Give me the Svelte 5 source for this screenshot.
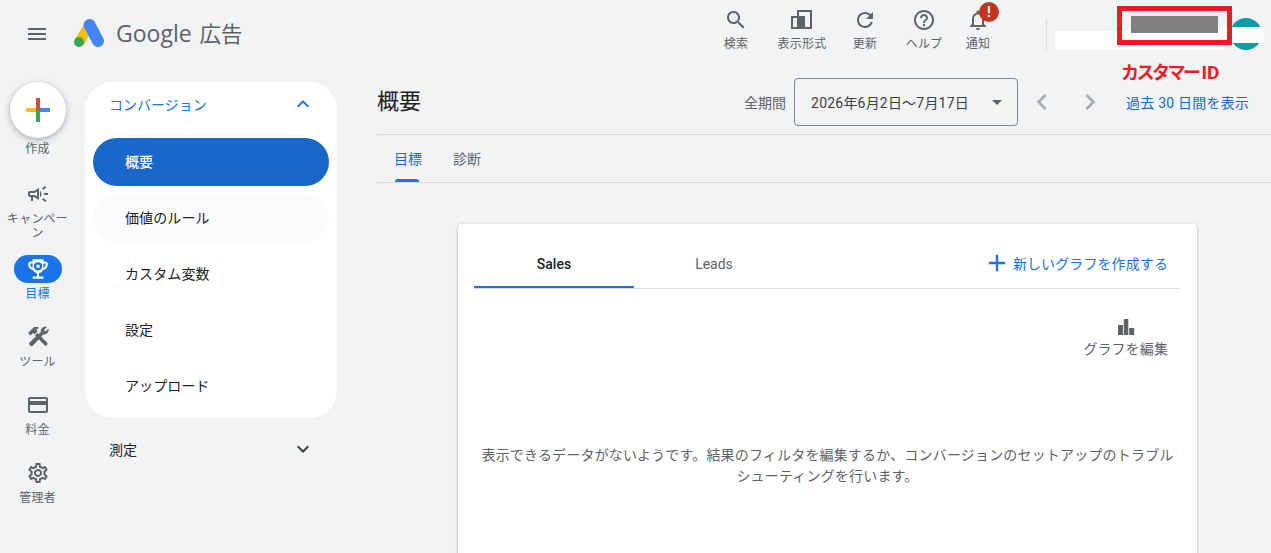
<script>
  const topActions = [
    { label: '検索', width: 60, path: 'M15.5 14h-.79l-.28-.27C15.41 12.59 16 11.11 16 9.5 16 5.91 13.09 3 9.5 3S3 5.91 3 9.5 5.91 16 9.5 16c1.61 0 3.09-.59 4.23-1.57l.27.28v.79l5 4.99L20.49 19l-4.99-5zm-6 0C7.01 14 5 11.99 5 9.5S7.01 5 9.5 5 14 7.01 14 9.5 11.99 14 9.5 14z' },
    { label: '表示形式', width: 72, path: 'M1 8h6V2h15v19H1zM3 10h4v9H3zM9 4h11v15h-5V8H9z' },
    { label: '更新', width: 54, path: 'M17.65 6.35C16.2 4.9 14.21 4 12 4c-4.42 0-7.99 3.58-7.99 8s3.57 8 7.99 8c3.73 0 6.84-2.55 7.73-6h-2.08c-.82 2.33-3.04 4-5.65 4-3.31 0-6-2.69-6-6s2.69-6 6-6c1.66 0 3.14.69 4.22 1.78L13 11h7V4l-2.35 2.35z' },
    { label: 'ヘルプ', width: 64, path: 'M11 18h2v-2h-2v2zm1-16C6.48 2 2 6.48 2 12s4.48 10 10 10 10-4.48 10-10S17.52 2 12 2zm0 18c-4.41 0-8-3.59-8-8s3.59-8 8-8 8 3.59 8 8-3.59 8-8 8zm0-14c-2.21 0-4 1.79-4 4h2c0-1.1.9-2 2-2s2 .9 2 2c0 2-3 1.75-3 5h2c0-2.25 3-2.5 3-5 0-2.21-1.79-4-4-4z' },
    { label: '通知', width: 44, badge: true, path: 'M12 22c1.1 0 2-.9 2-2h-4c0 1.1.9 2 2 2zm6-6v-5c0-3.07-1.63-5.64-4.5-6.32V4c0-.83-.67-1.5-1.5-1.5s-1.5.67-1.5 1.5v.68C7.64 5.36 6 7.92 6 11v5l-2 2v1h16v-1l-2-2zm-2 1H8v-6c0-2.48 1.51-4.5 4-4.5s4 2.02 4 4.5v6z' }
  ];

  const railItems = [
    { label: 'キャンペーン', h: 75, size: 24, path: 'M18 11v2h4v-2h-4zm-2 6.61c.96.71 2.21 1.65 3.2 2.39.4-.53.8-1.07 1.2-1.6-.99-.74-2.24-1.68-3.2-2.4-.4.54-.8 1.08-1.2 1.61zM20.4 5.6c-.4-.53-.8-1.07-1.2-1.6-.99.74-2.24 1.68-3.2 2.4.4.53.8 1.07 1.2 1.6.96-.72 2.21-1.65 3.2-2.4zM4 9c-1.1 0-2 .9-2 2v2c0 1.1.9 2 2 2h1v4h2v-4h1l5 3V6L8 9H4zm5.03 1.71L11 9.53v4.94l-1.97-1.18-.48-.29H4v-2h4.55l.48-.29zM15.5 12c0-1.33-.58-2.53-1.5-3.35v6.69c.92-.81 1.5-2.01 1.5-3.34z' },
    { label: '目標', h: 68, size: 26, active: true, path: 'M19 5h-2V3H7v2H5c-1.1 0-2 .9-2 2v1c0 2.55 1.92 4.63 4.39 4.94.63 1.5 1.98 2.63 3.61 2.96V19H7v2h10v-2h-4v-3.1c1.63-.33 2.98-1.46 3.61-2.96C19.08 12.63 21 10.55 21 8V7c0-1.1-.9-2-2-2zM5 8V7h2v3.82C5.84 10.4 5 9.3 5 8zm14 0c0 1.3-.84 2.4-2 2.82V7h2v1z' },
    { label: 'ツール', h: 68, size: 24, path: 'M21 2 18 5l1.5 1.5L22.5 3.5c.8 3.3-1.7 6.5-5.2 5.9L7 20.5a2 2 0 0 1-3-.3 2 2 0 0 1-.3-3L14.9 7C14 3.5 17.5 1 21 2zM9 10.5 11.5 8 21 17.5a1.8 1.8 0 0 1-2.6 2.6zM2 8l6-6h4l1 1-2.5 1.5 1 2L8.5 9.5 7 8 4.5 10.5z' },
    { label: '料金', h: 68, size: 24, path: 'M20 4H4c-1.11 0-1.99.89-1.99 2L2 18c0 1.11.89 2 2 2h16c1.11 0 2-.89 2-2V6c0-1.11-.89-2-2-2zm0 14H4v-6h16v6zm0-10H4V6h16v2z' },
    { label: '管理者', h: 68, size: 24, path: 'M19.43 12.98c.04-.32.07-.64.07-.98 0-.34-.03-.66-.07-.98l2.11-1.65c.19-.15.24-.42.12-.64l-2-3.46c-.09-.16-.26-.25-.44-.25-.06 0-.12.01-.17.03l-2.49 1c-.52-.4-1.08-.73-1.69-.98l-.38-2.65C14.46 2.18 14.25 2 14 2h-4c-.25 0-.46.18-.49.42l-.38 2.65c-.61.25-1.17.59-1.69.98l-2.49-1c-.06-.02-.12-.03-.18-.03-.17 0-.34.09-.43.25l-2 3.46c-.13.22-.07.49.12.64l2.11 1.65c-.04.32-.07.65-.07.98 0 .33.03.66.07.98l-2.11 1.65c-.19.15-.24.42-.12.64l2 3.46c.09.16.26.25.44.25.06 0 .12-.01.17-.03l2.49-1c.52.4 1.08.73 1.69.98l.38 2.65c.03.24.24.42.49.42h4c.25 0 .46-.18.49-.42l.38-2.65c.61-.25 1.17-.59 1.69-.98l2.49 1c.06.02.12.03.18.03.17 0 .34-.09.43-.25l2-3.46c.12-.22.07-.49-.12-.64l-2.11-1.65zm-1.98-1.71c.04.31.05.52.05.73 0 .21-.02.43-.05.73l-.14 1.13.89.7 1.08.84-.7 1.21-1.27-.51-1.04-.42-.9.68c-.43.32-.84.56-1.25.73l-1.06.43-.16 1.13-.2 1.35h-1.4l-.19-1.35-.16-1.13-1.06-.43c-.43-.18-.83-.41-1.23-.71l-.91-.7-1.06.43-1.27.51-.7-1.21 1.08-.84.89-.7-.14-1.13c-.03-.31-.05-.54-.05-.74s.02-.43.05-.73l.14-1.13-.89-.7-1.08-.84.7-1.21 1.27.51 1.04.42.9-.68c.43-.32.84-.56 1.25-.73l1.06-.43.16-1.13.2-1.35h1.39l.19 1.35.16 1.13 1.06.43c.43.18.83.41 1.23.71l.91.7 1.06-.43 1.27-.51.7 1.21-1.07.85-.89.7.14 1.13zM12 8c-2.21 0-4 1.79-4 4s1.79 4 4 4 4-1.79 4-4-1.79-4-4-4zm0 6c-1.1 0-2-.9-2-2s.9-2 2-2 2 .9 2 2-.9 2-2 2z' }
  ];

  const navItems = ['概要', '価値のルール', 'カスタム変数', '設定', 'アップロード'];
</script>

<div class="page">
  <header class="topbar">
    <button class="menu" aria-label="メニュー">
      <svg width="24" height="24" viewBox="0 0 24 24"><path d="M3 18h18v-2H3v2zm0-5h18v-2H3v2zm0-7v2h18V6H3z" /></svg>
    </button>
    <svg class="logo" width="32" height="30" viewBox="0 0 32 30" aria-hidden="true">
      <path d="M11 5 L1 21 L9 28 L18 12 Z" fill="#fbbc04" />
      <line x1="15.5" y1="7" x2="24" y2="23" stroke="#4285f4" stroke-width="12" stroke-linecap="round" />
      <circle cx="5" cy="24" r="5" fill="#34a853" />
    </svg>
    <div class="brand"><span class="brand-google">Google</span><span class="brand-ja">広告</span></div>

    <div class="actions">
      {#each topActions as a}
        <div class="action" style="width: {a.width}px">
          <div class="action-icon">
            <svg width="24" height="24" viewBox="0 0 24 24"><path d={a.path} fill-rule="evenodd" /></svg>
            {#if a.badge}<span class="badge">!</span>{/if}
          </div>
          <span>{a.label}</span>
        </div>
      {/each}
    </div>
    <div class="divider"></div>
    <div class="account">
      <div class="avatar"></div>
      <div class="redact-white"></div>
      <div class="redact-strip"></div>
      <div class="redact-box"><div class="redact-gray"></div></div>
      <div class="redact-label">カスタマー<span>ID</span></div>
    </div>
  </header>

  <div class="body">
    <aside class="rail">
      <button class="create" aria-label="作成">
        <svg width="24" height="24" viewBox="0 0 24 24">
          <rect x="0" y="10" width="12" height="4" fill="#fbbc04" />
          <rect x="12" y="10" width="12" height="4" fill="#4285f4" />
          <rect x="10" y="0" width="4" height="12" fill="#ea4335" />
          <rect x="10" y="12" width="4" height="12" fill="#34a853" />
        </svg>
      </button>
      <div class="rail-label create-label">作成</div>
      {#each railItems as item}
        <div class="rail-item" class:active={item.active} style="height: {item.h}px">
          <div class="rail-icon">
            <svg width={item.size} height={item.size} viewBox="0 0 24 24">
              <path d={item.path} />
              {#if item.active}
                <circle cx="12" cy="9.5" r="3.8" fill="#1a73e8" />
                <circle cx="12" cy="9.5" r="1.6" fill="#fff" />
              {/if}
            </svg>
          </div>
          <div class="rail-label">{item.label}</div>
        </div>
      {/each}
    </aside>

    <nav class="nav">
      <div class="nav-card">
        <div class="nav-head">
          <span>コンバージョン</span>
          <svg width="24" height="24" viewBox="0 0 24 24"><path d="M7.41 15.41 12 10.83l4.59 4.58L18 14l-6-6-6 6z" /></svg>
        </div>
        {#each navItems as label, i}
          <div class="nav-item" class:selected={i === 0} class:hover={i === 1}>{label}</div>
        {/each}
      </div>
      <div class="nav-head closed">
        <span>測定</span>
        <svg width="24" height="24" viewBox="0 0 24 24"><path d="M7.41 8.59 12 13.17l4.59-4.58L18 10l-6 6-6-6z" /></svg>
      </div>
    </nav>

    <main class="main">
      <div class="title-row">
        <h1>概要</h1>
        <div class="date-tools">
          <span class="period">全期間</span>
          <div class="date-select">
            <span>2026年6月2日〜7月17日</span>
            <i class="caret"></i>
          </div>
          <svg class="pager" width="32" height="32" viewBox="0 0 24 24"><path d="M15.41 7.41 14 6l-6 6 6 6 1.41-1.41L10.83 12z" /></svg>
          <svg class="pager next" width="32" height="32" viewBox="0 0 24 24"><path d="M8.59 16.59 10 18l6-6-6-6-1.41 1.41L13.17 12z" /></svg>
          <span class="recent">過去 30 日間を表示</span>
        </div>
      </div>

      <div class="tabs">
        <div class="tab on">目標</div>
        <div class="tab">診断</div>
      </div>

      <section class="card">
        <div class="card-tabs">
          <div class="card-tab on">Sales</div>
          <div class="card-tab">Leads</div>
          <div class="new-graph">
            <svg width="28" height="28" viewBox="0 0 24 24"><path d="M19 13h-6v6h-2v-6H5v-2h6V5h2v6h6v2z" /></svg>
            <span>新しいグラフを作成する</span>
          </div>
        </div>
        <div class="edit-graph">
          <svg width="18" height="18" viewBox="0 0 18 18"><path d="M1 7h5v10H1zM6.8 1h4.5v16H6.8zM12.2 10h5v7h-5z" /></svg>
          <span>グラフを編集</span>
        </div>
        <p class="empty">表示できるデータがないようです。結果のフィルタを編集するか、コンバージョンのセットアップのトラブルシューティングを行います。</p>
      </section>
    </main>
  </div>
</div>

<style>
  :global(body) {
    margin: 0;
    background: #f1f3f5;
  }

  .page {
    height: 553px;
    overflow: hidden;
    background: #f1f3f5;
    font-family: Roboto, "Noto Sans CJK JP", sans-serif;
    color: #202124;
  }

  button {
    border: 0;
    padding: 0;
    background: none;
    cursor: pointer;
  }

  svg {
    display: block;
    fill: #5f6368;
  }

  /* top bar */
  .topbar {
    height: 68px;
    display: flex;
    align-items: center;
    padding-left: 25px;
  }

  .menu {
    width: 24px;
    height: 24px;
  }

  .logo {
    margin-left: 25px;
    margin-top: -2px;
  }

  .brand {
    margin-left: 10px;
    margin-top: -3px;
    color: #5f6368;
    font-size: 24px;
    display: flex;
    gap: 8px;
    align-items: baseline;
  }

  .brand-google {
    font-family: "Open Sans", Roboto, sans-serif;
    font-size: 23px;
  }

  .brand-ja {
    font-weight: 400;
    font-size: 21.5px;
  }

  .actions {
    display: flex;
    margin-left: auto;
    align-self: flex-start;
    padding-top: 8px;
  }

  .action {
    display: flex;
    flex-direction: column;
    align-items: center;
    font-size: 12px;
    line-height: 16px;
    letter-spacing: 0.2px;
    color: #5f6368;
    white-space: nowrap;
  }

  .action-icon {
    position: relative;
    height: 28px;
  }

  .badge {
    position: absolute;
    left: 13px;
    top: -6px;
    width: 20px;
    height: 20px;
    border-radius: 50%;
    background: #c5341f;
    color: #fff;
    font-size: 14px;
    font-weight: 700;
    line-height: 20px;
    text-align: center;
  }

  .divider {
    width: 1px;
    height: 32px;
    background: #dadce0;
    margin-left: 46px;
    flex: none;
  }

  .account {
    position: relative;
    width: 224px;
    flex: none;
    height: 68px;
  }

  .avatar {
    position: absolute;
    left: 183px;
    top: 18px;
    width: 32px;
    height: 32px;
    border-radius: 50%;
    background: #069fa6;
  }

  .redact-white {
    position: absolute;
    left: 8px;
    top: 31px;
    width: 168px;
    height: 19px;
    background: #fff;
  }

  .redact-strip {
    position: absolute;
    left: 176px;
    top: 27px;
    width: 41px;
    height: 16px;
    background: #fff;
  }

  .redact-box {
    position: absolute;
    left: 70px;
    top: 6px;
    width: 115px;
    height: 39px;
    box-sizing: border-box;
    border: 5px solid #ed1c24;
    padding: 5px 9px;
  }

  .redact-gray {
    width: 87px;
    height: 17px;
    background: #808080;
  }

  .redact-label {
    position: absolute;
    left: 74px;
    top: 61px;
    color: #ed1c24;
    font-size: 18px;
    font-weight: 700;
    line-height: 24px;
    white-space: nowrap;
    letter-spacing: -2.5px;
  }

  .redact-label span {
    font-size: 19px;
    letter-spacing: 0;
    margin-left: 3px;
  }

  /* body */
  .body {
    display: flex;
  }

  .rail {
    width: 75px;
    flex: none;
    display: flex;
    flex-direction: column;
    align-items: center;
    padding-top: 14px;
  }

  .create {
    width: 56px;
    height: 56px;
    border-radius: 50%;
    background: #fff;
    box-shadow: 0 2px 6px rgba(60, 64, 67, 0.4);
    display: grid;
    place-items: center;
  }

  .rail-label {
    font-size: 12px;
    line-height: 14px;
    letter-spacing: 0.2px;
    color: #5f6368;
    text-align: center;
    width: 62px;
  }

  .create-label {
    margin: 3px 0 22px;
    height: 17px;
    line-height: 17px;
  }

  .rail-item {
    display: flex;
    flex-direction: column;
    align-items: center;
  }

  .rail-icon {
    width: 48px;
    height: 28px;
    border-radius: 14px;
    display: grid;
    place-items: center;
    margin-bottom: 4px;
  }

  .rail-item.active .rail-icon {
    background: #1a73e8;
  }

  .rail-item.active svg {
    fill: #fff;
  }

  .rail-item.active .rail-label {
    color: #1a73e8;
  }

  .nav {
    width: 252px;
    flex: none;
    margin-left: 10px;
    padding-top: 14px;
  }

  .nav-card {
    background: #fff;
    border-radius: 28px;
    height: 336px;
    box-sizing: border-box;
    padding: 0 8px;
  }

  .nav-head {
    height: 46px;
    margin-bottom: 10px;
    box-sizing: border-box;
    padding: 0 14px 2px 16px;
    display: flex;
    align-items: center;
    justify-content: space-between;
    font-size: 14px;
    color: #1a73e8;
  }

  .nav-head svg {
    fill: #1a73e8;
  }

  .nav-head.closed {
    margin: 9px 0 0;
    padding: 0 22px 2px 24px;
    color: #202124;
  }

  .nav-head.closed svg {
    fill: #3c4043;
  }

  .nav-item {
    height: 48px;
    box-sizing: border-box;
    padding: 0 0 2px 32px;
    margin-bottom: 8px;
    border-radius: 24px;
    display: flex;
    align-items: center;
    font-size: 14px;
    letter-spacing: 0.1px;
  }

  .nav-item.selected {
    background: #1967c8;
    color: #fff;
    font-weight: 500;
  }

  .nav-item.hover {
    background: #fbfbfb;
  }

  .main {
    flex: 1;
    margin-left: 40px;
    min-width: 0;
  }

  .title-row {
    height: 66px;
    display: flex;
    align-items: center;
    border-bottom: 1px solid #dadce0;
    padding-right: 22px;
  }

  h1 {
    margin: -4px 0 0;
    font-size: 22px;
    font-weight: 400;
  }

  .date-tools {
    display: flex;
    align-items: center;
    margin-left: auto;
    margin-top: 2px;
    font-size: 14px;
  }

  .period {
    font-size: 14px;
    color: #5f6368;
    margin-right: 8px;
  }

  .date-select {
    width: 224px;
    height: 48px;
    box-sizing: border-box;
    border: 1px solid #80868b;
    border-radius: 4px;
    display: flex;
    align-items: center;
    justify-content: space-between;
    padding: 0 15px 0 16px;
    font-size: 14px;
    letter-spacing: 0.2px;
    color: #3c4043;
  }

  .caret {
    width: 0;
    height: 0;
    border: 5px solid transparent;
    border-top-color: #5f6368;
    border-bottom: 0;
  }

  .pager {
    fill: #a8abaf;
    margin-left: 8px;
  }

  .pager.next {
    margin-left: 16px;
    margin-right: 20px;
  }

  .recent {
    font-size: 14px;
    letter-spacing: 0.2px;
    color: #1967d2;
  }

  .tabs {
    display: flex;
    height: 47px;
    border-bottom: 1px solid #dadce0;
    padding-left: 17px;
    gap: 31px;
  }

  .tab {
    position: relative;
    font-size: 14px;
    line-height: 48px;
    color: #5f6368;
    width: 28px;
    white-space: nowrap;
  }

  .tab.on {
    color: #1967d2;
  }

  .tab.on::after {
    content: "";
    position: absolute;
    left: 1px;
    right: 3px;
    bottom: 0;
    height: 3px;
    background: #1a73e8;
    border-radius: 3px 3px 0 0;
  }

  .card {
    margin: 41px 0 0 81px;
    width: 739px;
    height: 420px;
    box-sizing: border-box;
    background: #fff;
    border-radius: 4px;
    box-shadow: 0 1px 3px rgba(60, 64, 67, 0.4);
    padding: 16px;
  }

  .card-tabs {
    display: flex;
    align-items: stretch;
    height: 48px;
    border-bottom: 1px solid #dadce0;
    margin-right: 1px;
  }

  .card-tab {
    width: 160px;
    text-align: center;
    line-height: 49px;
    font-size: 14px;
    color: #5f6368;
  }

  .card-tab.on {
    color: #202124;
    font-weight: 500;
    box-shadow: inset 0 -2px 0 #1a73e8;
  }

  .new-graph {
    margin-left: auto;
    display: flex;
    align-items: center;
    gap: 2px;
    padding: 0 12px 2px 0;
    font-size: 14px;
    letter-spacing: 0.1px;
    color: #1a73e8;
  }

  .new-graph svg {
    fill: #1a73e8;
  }

  .edit-graph {
    margin-top: 29px;
    padding-right: 13px;
    display: flex;
    flex-direction: column;
    align-items: flex-end;
    font-size: 14px;
    line-height: 20px;
    letter-spacing: 0.1px;
    color: #5f6368;
  }

  .edit-graph svg {
    margin-right: 33px;
    margin-bottom: 3px;
  }

  .empty {
    margin: 86px auto 0;
    width: 700px;
    font-size: 14px;
    line-height: 21px;
    letter-spacing: 0.18px;
    text-align: center;
    color: #5f6368;
  }
</style>
